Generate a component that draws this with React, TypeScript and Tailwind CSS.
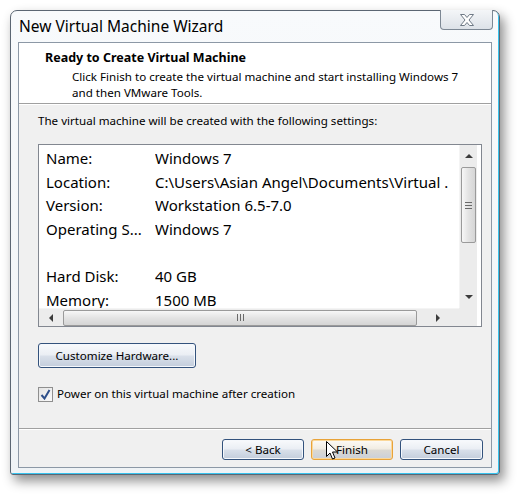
import React from "react";

const font = { fontFamily: '"Noto Sans", "Open Sans", Arial, sans-serif' };

function WinButton({ label, hot = false, className = "" }: { label: string; hot?: boolean; className?: string }) {
  return (
    <div
      className={`flex items-center justify-center rounded-[3px] border text-[11.6px] text-black ${
        hot
          ? "border-[#e8a33a] shadow-[inset_0_0_0_1px_#fbd89a] bg-[linear-gradient(to_bottom,#fdfbf6_0%,#f1ece2_48%,#dcd9d2_52%,#c9cfd9_100%)]"
          : "border-[#33527c] shadow-[inset_0_0_0_1px_#f5f8fc] bg-[linear-gradient(to_bottom,#f8fafc_0%,#eaeef4_48%,#d9e0ea_52%,#c3cddc_100%)]"
      } ${className}`}
    >
      {label}
    </div>
  );
}

function Arrow({ dir }: { dir: "up" | "down" | "left" | "right" }) {
  const pts = {
    up: "0,5 4,1 8,5",
    down: "0,1 4,5 8,1",
    left: "5,0 1,4 5,8",
    right: "1,0 5,4 1,8",
  }[dir];
  const vertical = dir === "up" || dir === "down";
  return (
    <svg width={vertical ? 8 : 6} height={vertical ? 6 : 8} viewBox={vertical ? "0 0 8 6" : "0 0 6 8"}>
      <polygon points={pts} fill="#3c3c3c" />
    </svg>
  );
}

export default function App() {
  const rows: [string, string][] = [
    ["Name:", "Windows 7"],
    ["Location:", "C:\\Users\\Asian Angel\\Documents\\Virtual ."],
    ["Version:", "Workstation 6.5-7.0"],
    ["Operating S...", "Windows 7"],
    ["", ""],
    ["Hard Disk:", "40 GB"],
    ["Memory:", "1500 MB"],
  ];

  return (
    <div className="w-[518px] h-[495px] bg-white pl-[10px] pt-[10px]" style={font}>
      {/* window frame */}
      <div className="w-[490px] h-[465px] flex flex-col rounded-t-[7px] rounded-b-[3px] border border-[#5b6673] bg-[linear-gradient(to_bottom,#f8fafc,#eff3f6)] px-[7px] pb-[6px] shadow-[inset_-1px_-1px_0_#37c3ee,4px_6px_12px_rgba(0,0,0,0.45)]">
        {/* title bar */}
        <div className="h-[31px] flex items-start justify-between">
          <div className="pl-[1px] pt-[5px] text-[15.5px] leading-[20px] text-black">New Virtual Machine Wizard</div>
          <div className="mt-[-1px] mr-[-1px] w-[53px] h-[20px] flex items-center justify-center rounded-b-[4px] border border-t-0 border-[#7d8894] bg-[linear-gradient(to_bottom,#f4f6f8,#dde2e8)]">
            <svg width="18" height="14" viewBox="0 0 18 14">
              <path
                d="M2.5 1.5 H6.5 L9 4.5 L11.5 1.5 H15.5 L11 7 L15.5 12.5 H11.5 L9 9.5 L6.5 12.5 H2.5 L7 7 Z"
                fill="#ffffff"
                stroke="#6f7a86"
                strokeWidth="1"
                strokeLinejoin="round"
              />
            </svg>
          </div>
        </div>

        {/* client area */}
        <div className="flex-1 flex flex-col border border-[#8c98a6] bg-[#f0f0f0]">
          {/* header */}
          <div className="h-[61px] bg-white border-b border-[#a0a0a0] pl-[26px] pt-[7px] text-black">
            <div className="font-bold text-[12.5px] leading-[16px]">Ready to Create Virtual Machine</div>
            <div className="pl-[27px] pt-[3px] text-[11.6px] leading-[16px]">
              Click Finish to create the virtual machine and start installing Windows 7
              <br />
              and then VMware Tools.
            </div>
          </div>
          <div className="h-px bg-white" />

          {/* body */}
          <div className="flex-1 flex flex-col pl-[19px] pr-[9px]">
            <div className="pt-[8px] text-[11.6px] leading-[16px] text-black">
              The virtual machine will be created with the following settings:
            </div>

            {/* list box */}
            <div className="mt-[15px] w-[444px] h-[183px] flex flex-col border border-[#828790] bg-white">
              <div className="flex-1 flex min-h-0">
                <div className="flex-1 overflow-hidden pl-[7px] pt-[2px] text-[15px] leading-[23.6px] text-black">
                  {rows.map(([k, v], i) => (
                    <div key={i} className="flex h-[23.6px] whitespace-nowrap">
                      <div className="w-[109px] shrink-0">{k}</div>
                      <div className="overflow-hidden">{v}</div>
                    </div>
                  ))}
                </div>
                {/* vertical scrollbar */}
                <div className="w-[18px] flex flex-col bg-[#ececec] border-l border-[#f4f4f4]">
                  <div className="h-[22px] flex items-center justify-center">
                    <Arrow dir="up" />
                  </div>
                  <div className="mx-[1px] h-[76px] flex items-center justify-center rounded-[2px] border border-[#9a9a9a] bg-[linear-gradient(to_right,#f7f7f7,#e3e3e3_50%,#d5d5d5)]">
                    <div className="flex flex-col gap-[2px]">
                      <div className="w-[7px] h-px bg-[#6a6a6a]" />
                      <div className="w-[7px] h-px bg-[#6a6a6a]" />
                      <div className="w-[7px] h-px bg-[#6a6a6a]" />
                    </div>
                  </div>
                  <div className="flex-1" />
                  <div className="h-[22px] flex items-center justify-center">
                    <Arrow dir="down" />
                  </div>
                </div>
                <div className="w-[4px]" />
              </div>
              {/* horizontal scrollbar */}
              <div className="h-[18px] flex">
                <div className="w-[420px] flex items-center bg-[#ececec] border-t border-[#f4f4f4]">
                  <div className="w-[24px] flex items-center justify-center">
                    <Arrow dir="left" />
                  </div>
                  <div className="w-[354px] h-[16px] flex items-center justify-center rounded-[2px] border border-[#9a9a9a] bg-[linear-gradient(to_bottom,#f7f7f7,#e3e3e3_50%,#d5d5d5)]">
                    <div className="flex gap-[2px]">
                      <div className="w-px h-[7px] bg-[#6a6a6a]" />
                      <div className="w-px h-[7px] bg-[#6a6a6a]" />
                      <div className="w-px h-[7px] bg-[#6a6a6a]" />
                    </div>
                  </div>
                  <div className="flex-1 flex items-center justify-center">
                    <Arrow dir="right" />
                  </div>
                </div>
                <div className="w-[18px] bg-[#ececec]" />
              </div>
            </div>

            <WinButton label="Customize Hardware..." className="mt-[16px] w-[158px] h-[25px]" />

            <div className="mt-[18px] flex items-center gap-[4px] text-[11.6px] leading-[16px] text-black">
              <div className="w-[15px] h-[15px] flex items-center justify-center border border-[#8f8f8f] bg-[linear-gradient(135deg,#e4e4e4,#fafafa)]">
                <svg width="11" height="11" viewBox="0 0 11 11">
                  <path d="M1.5 6 L4.5 9.5 L9.5 1" fill="none" stroke="#2d4f8a" strokeWidth="2" />
                </svg>
              </div>
              <span>Power on this virtual machine after creation</span>
            </div>
          </div>

          {/* footer */}
          <div className="mt-auto border-t border-[#a0a0a0] shadow-[inset_0_1px_0_#ffffff] h-[39px] flex items-start justify-end gap-[7px] pr-[8px] pt-[10px]">
            <WinButton label="< Back" className="w-[82px] h-[21px]" />
            <div className="relative">
              <WinButton label="Finish" hot className="w-[82px] h-[21px]" />
              <svg className="absolute left-[15px] top-[2px]" width="12" height="19" viewBox="0 0 12 19">
                <path d="M0.5 0.5 V15.5 L4 12 L6.5 18 L9 17 L6.5 11 H11.5 Z" fill="#ffffff" stroke="#000000" strokeWidth="1" strokeLinejoin="round" />
              </svg>
            </div>
            <WinButton label="Cancel" className="w-[83px] h-[21px]" />
          </div>
        </div>
      </div>
    </div>
  );
}
